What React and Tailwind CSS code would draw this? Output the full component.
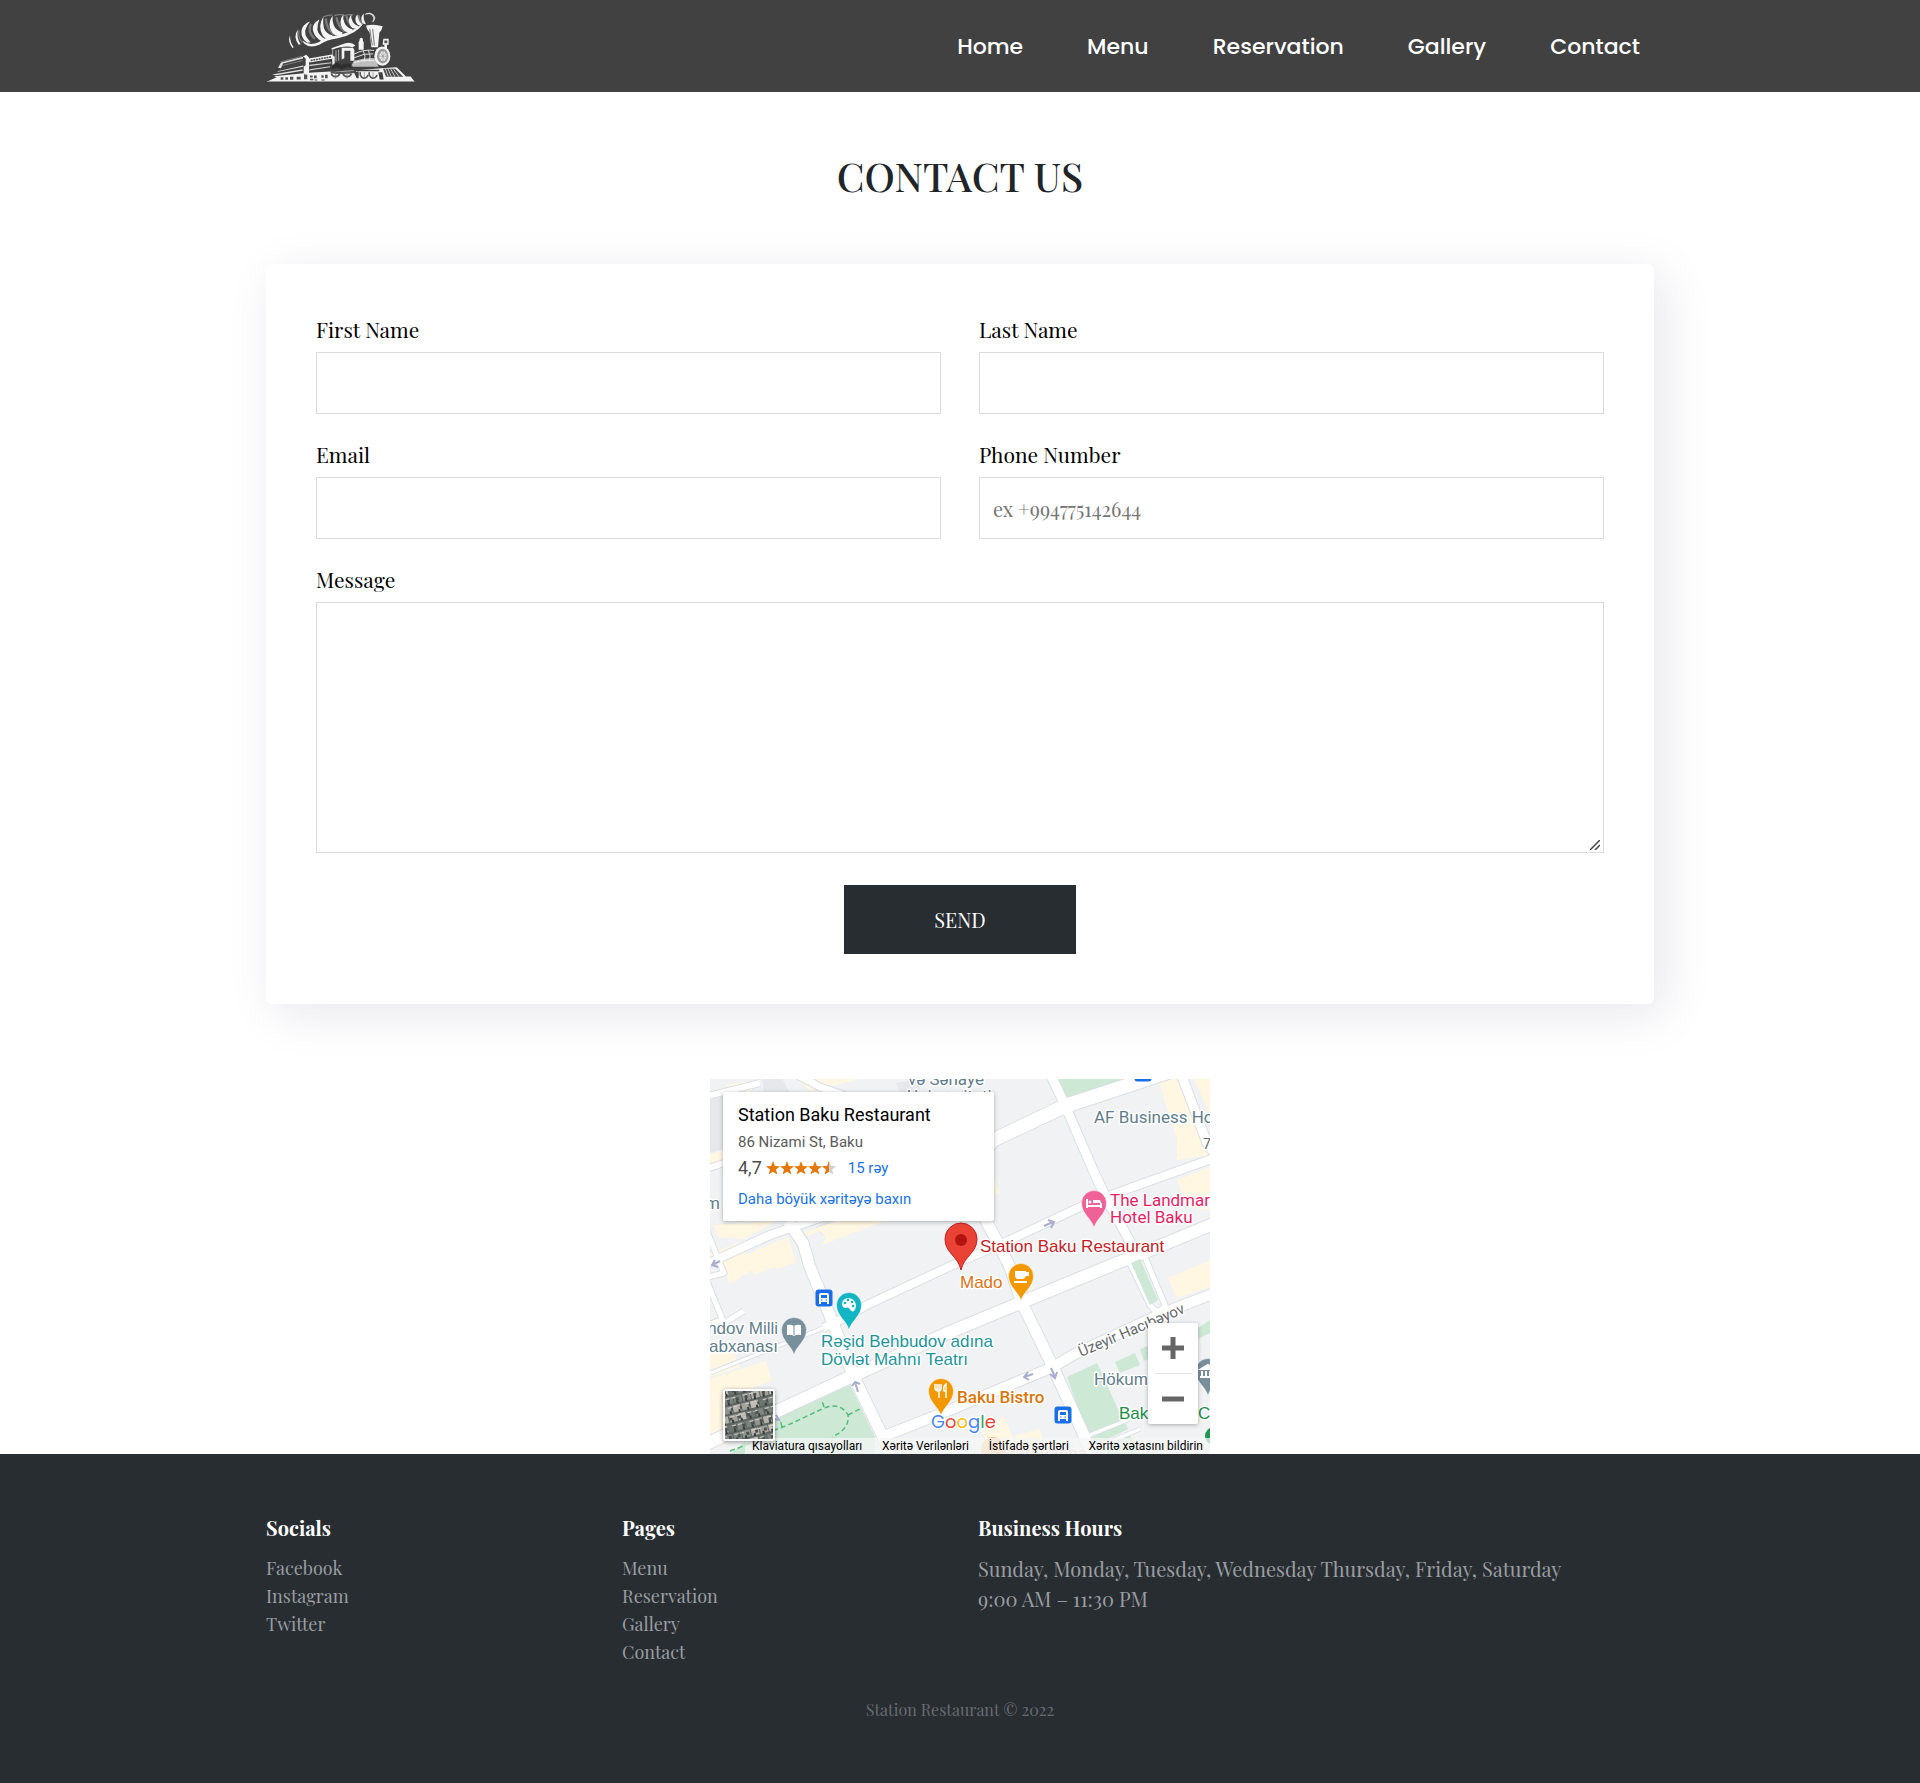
import React from "react";

const navLinks = ["Home", "Menu", "Reservation", "Gallery", "Contact"];

function TrainLogo() {
  return (
    <svg viewBox="36 20 450 230" className="h-[77px] w-[150px]" fill="#f4f4f4" role="img" aria-label="Station Restaurant">
      <g fill="none" stroke="#aaa" strokeLinecap="round" opacity=".55">
        <path d="M170 70q-10 20 10 40M216 54q0 24 22 44M248 50q4 22 22 38M278 46q4 20 20 30M314 44q0 12 8 22" strokeWidth="7" />
        <path d="M135 88q-4 20 10 34M208 46q12-6 26-5M242 42q12-4 26-2M272 42q12-4 24-2" strokeWidth="4" />
      </g>
      <g>
        <path d="M108 102q-8 18 8 38q4-2 2-4q-10-14-10-34z" />
        <path d="M132 84q-16 20 2 46l6-2q-14-20-8-44z" />
        <path d="M168 60q-32 12-24 44q4 12 16 20l10-2q-24-24-14-42q4-10 12-20z" />
        <path d="M196 54q-30 16-14 46q10 16 24 20l6-8q-20-12-22-28q0-16 6-30z" />
        <path d="M208 46q-18 28-2 56q10 14 28 8l2-8q-20-6-26-22q-4-16-2-34z" />
        <path d="M236 42q-18 26-2 50q12 16 30 8l2-7q-20-6-26-20q-6-14-4-31z" />
        <path d="M268 38q-16 22-2 44q10 16 28 8l2-7q-18-4-24-18q-6-12-4-27z" />
        <path d="M292 38q-14 18-2 36q8 12 22 6l2-6q-14-4-18-14q-6-10-4-22z" />
        <path d="M310 38q-12 16 0 30q6 6 14 4l-2-6q-10-8-12-28zM330 36q-14 12-4 30l10 2q-10-16-6-32z" />
      </g>
      <path d="M334 38q14-8 24 2q10 10-2 22q8-14-2-22q-8-6-20-2z" stroke="#e5e5e5" strokeWidth="2" />
      <path d="M146 118q20 16 48 4q24-18 54-20q42-8 80-36q-20 32-76 44q-34 4-56 20q-28 12-46-4z" />
      <path d="M336 72q24-6 50 2q-2 12-10 20l-4 43h-20l-5-43q-9-10-11-22z" />
      <path d="M347 82q4 26 8 50M356 82l5 50" fill="none" stroke="#777" strokeWidth="3" />
      <path d="M388 112h16v18h-5v12h-8v-12h-5z" />
      <path d="M391 117h9v8h-9z" fill="#555" />
      <ellipse cx="385" cy="164" rx="24" ry="29" />
      <ellipse cx="386" cy="164" rx="17" ry="22" fill="#999" />
      <ellipse cx="387" cy="164" rx="11" ry="15" fill="#eee" />
      <path d="M387 145v38M374 164h27M377 151l20 26M397 151l-20 26" stroke="#999" strokeWidth="2" />
      <path d="M232 140l40-14q20-6 32 6l-8 5q-25-6-62 8z" />
      <path d="M263 139h34l4 6v33h-12v-30h-18v22l-8 4z" />
      <path d="M236 144v34M246 146v34M254 144v34" fill="none" stroke="#aaa" strokeWidth="3" />
      <path d="M314 145v-19q-2-4 2-7q1-10 6-10q5 0 5 10q4 4 2 8v18z" />
      <path d="M300 158q30-16 60-11M300 169q32-15 58-12M300 183q30-10 60-6M328 148q9 16 2 34M343 146q9 18 3 34" fill="none" stroke="#ddd" strokeWidth="3" />
      <path d="M300 178q34-10 62-8l12 26H290z" opacity=".7" />
      <path d="M72 199l9-16l66-17v5l-60 15l-6 14zM70 209l78-17v4l-76 15zM54 219l92-16v5l-80 13z" opacity=".9" />
      <path d="M80 181l66-17M82 193l64-16" stroke="#999" strokeWidth="2" />
      <path d="M147 165l10-5l8 8v48h-16v-20l6-5v-20z" />
      <path d="M164 171l70-12l6 6l-6 7l-68 11z" />
      <path d="M170 177l62-11" stroke="#555" strokeWidth="5" strokeDasharray="6 2" />
      <path d="M166 190l66-8v3l-66 9zM166 203l62-9v3l-62 10z" opacity=".8" />
      <path d="M235 168l7-4v24l-7 5z" />
      <path d="M234 190q16-12 28 1q18-13 34 2v8q-18-9-31 3q-17-10-31-1z" fill="#222" opacity=".6" />
      <path d="M60 224l104-10l66-4l80-4l72-6l46-3l28 28h14l12 16H38l30-14z" />
      <path d="M230 206q34 8 76 0v8q-38 7-76 1z" fill="#555" />
      <g fill="none" stroke="#555" strokeWidth="5">
        <path d="M232 216a13 13 0 0 0 25 0M267 216a13 13 0 0 0 25 0M319 212a12 14 0 0 0 23 8M346 212a12 14 0 0 0 23 8" />
      </g>
      <path d="M244 210v22M279 210v22M331 212v20M357 212v20" stroke="#777" strokeWidth="2" />
      <path d="M300 205h76v4h-76zM373 212h12l4 22h-12zM300 213l14-3v20h-6z" fill="#414141" />
      <g fill="#555">
        <path d="M80 227h8v8H80zM94 227h8v8H94zM108 226h10v9h-10zM128 226h12v8h-12zM150 218l10 2v13h-10zM168 222h8v6h-8zM180 222h8v8h-8zM202 221h7v8h-7zM213 220h8v10h-8z" />
        <path d="M168 232h10v4h-10zM182 234h8v3h-8zM202 234h10v3h-10z" />
      </g>
      <path d="M387 202l37 0l24 24h-52z" fill="#4a4a4a" />
      <path d="M394 202l9 24M402 202l10 24M410 202l13 24M418 202l17 24" stroke="#ccc" strokeWidth="3" />
      <path d="M40 240H480" stroke="#999" strokeWidth="3" />
    </svg>
  );
}

function Pin({ x, y, color, children }) {
  return (
    <g transform={`translate(${x} ${y})`}>
      <path d="M0 25C-2 16-12.5 11-12.5 0a12.5 12.5 0 0 1 25 0C12.5 11 2 16 0 25z" fill={color} stroke="#fff" strokeOpacity=".5" />
      {children}
    </g>
  );
}

function BusStop({ x, y }) {
  return (
    <g transform={`translate(${x} ${y})`}>
      <rect x="-8.500" y="-8.500" width="17" height="17" rx="3" fill="#1a6fe8" />
      <path d="M-5 6V-3q0-2 2-2H3q2 0 2 2V6H3V4H-3V6z" fill="#fff" />
      <path d="M-3-3H3V0H-3z" fill="#1a6fe8" />
      <path d="M-3 2h1.500M1.500 2H3" stroke="#1a6fe8" />
    </g>
  );
}

const mainRoads = [
  ["M240 124L284 60L355 26L453-6L510-28", 12],
  ["M270 68L355 28L470-10", 12],
  ["M336-14L355 26L383 91L397 121L422 166", 9],
  ["M0 294L113 249", 3],
  ["M113 249L130 241L157 226L247 184L300 161L370 128L423 108L510 77", 8],
  ["M510 142L423 178L407 184L310 224L240 253L140 298L63 334L-10 368", 12],
  ["M265 118L277 143L300 188L312 224L343 288L373 354L385 385", 11],
  ["M510 212L453 234L363 276L343 288L240 331L177 356", 10],
  ["M78 142L93 164L100 188L123 244L143 296L173 358L184 384", 11],
  ["M470-8L497 64L510 82", 9],
  ["M-10 188L60 156L130 132", 8],
  ["M-4 150L14 194L-10 200", 5],
  ["M-10 92L20 82M-6 18L50 4", 6],
  ["M80-8L110 8L150 22", 7],
  ["M-4 200L14 244L34 232M14 240L-8 248", 5],
  ["M416 176L440 226Q448 238 455 226L434 176", 5],
  ["M380 356L420 340M392 366L430 350", 3],
];

function MapCanvas() {
  return (
    <svg viewBox="0 0 500 375" className="block h-full w-full" aria-hidden="true">
      <rect width="500" height="375" fill="#f0f2f4" />
      <g fill="#e6e8ec">
        <path d="M0 18L20 14V68L0 74zM186 4L210 0V14H190zM130 136L180 136L112 156L106 148zM52 0L70-4L80 14H54zM10 150L60 142L20 158z" />
      </g>
      <g fill="#fff7e2">
        <path d="M16 6L38 2L44 18L20 20zM86 0L150 0L100 12zM0 75L14 71V84L0 89zM92 154L150 134L190 136L112 166L116 158L110 152L96 158zM4 146L40 144L66 142L34 160L8 158zM7 172L30 163L38 178L78 158L86 184L66 190L60 180L20 205zM-4 198L-4 174L4 176zM36 176L72 160L86 180L44 196zM0 300L56 282L62 302L20 316L18 366L0 366zM0 270L18 262L30 288L0 298zM448 0L466 0L500 76L467 81L467 60zM484 0H500V36zM467 101L500 88V131L477 128zM458 199L500 181V208L467 219zM270 348L294 338L304 362L280 372zM284 100L290 114L284 116zM306 356L330 350L334 366L300 372z" />
      </g>
      <g fill="#cde9d6">
        <path d="M346 0H430L355 23zM357 298L387 284L407 328L418 350L382 368zM405 283L425 274L430 286L410 294zM430 270L438 267V280L434 282zM488 249L500 241V254L488 260zM140 306L165 358V375H20L66 338zM400 366L418 352L430 375H396z" />
      </g>
      <g fill="none" stroke="#53bd7a" strokeWidth="1.500" strokeDasharray="5 3">
        <path d="M20 372Q44 364 62 352L78 346L112 330Q130 322 138 336Q140 350 122 358M138 336L150 330M114 328L112 322M72 348L70 340" />
      </g>
      <g fill="none" strokeLinejoin="round">
        {mainRoads.map(([d, w]) => <path key={d} d={d} stroke="#dcdfe5" strokeWidth={w + 2} />)}
        {mainRoads.map(([d, w]) => <path key={d} d={d} stroke="#fff" strokeWidth={w} />)}
      </g>
      <path d="M421 184L430 180L448 221L440 226z" fill="#cde9d6" />
      <g fill="none" stroke="#a9add0" strokeWidth="2">
        <path d="M334 147L343 143M338 141L344 143L341 149" />
        <path d="M2 186L10 182M5 181L2 186L8 188" />
        <path d="M148 313L145 303M142 307L145 303L150 305" />
        <path d="M314 298L323 295M318 293L314 298L319 301" />
        <path d="M341 289L345 298M340 295L345 299L347 293" />
        <path d="M66 336L69 341L64 340" />
      </g>
      <g fontFamily="Roboto, sans-serif" fontSize="17" stroke="#fff" strokeWidth="3" paintOrder="stroke" strokeLinejoin="round">
        <g fill="#5f7d8c">
          <text x="198" y="6">və Sənaye</text>
          <text x="197" y="23">Universiteti</text>
          <text x="384" y="44">AF Business Ho</text>
          <text x="-5" y="130">m</text>
          <g fontFamily="Liberation Sans, sans-serif">
            <text x="68" y="255" textAnchor="end">Əfəndov Milli</text>
            <text x="68" y="273" textAnchor="end">Kitabxanası</text>
            <text x="384" y="306">Hökumət</text>
          </g>
        </g>
        <g fill="#e91e63">
          <text x="400" y="127">The Landmark</text>
          <text x="400" y="144">Hotel Baku</text>
        </g>
        <g fontFamily="Liberation Sans, sans-serif">
          <text x="270" y="173" fill="#c5221f">Station Baku Restaurant</text>
          <text x="250" y="209" fill="#dd7410">Mado</text>
          <text x="111" y="268" fill="#22959c">Rəşid Behbudov adına</text>
          <text x="111" y="286" fill="#22959c">Dövlət Mahnı Teatrı</text>
          <text x="409" y="340" fill="#218c4a">Bakı</text>
          <text x="488" y="340" fill="#218c4a">C</text>
        </g>
        <text x="247" y="324" fill="#dc7609" fontWeight="500">Baku Bistro</text>
        <text x="291" y="380" fill="#d8a070" opacity=".6">Mari Vanna</text>
        <text transform="translate(371 278) rotate(-23)" fontSize="15" fill="#65696d">Üzeyir Hacıbəyov</text>
        <text x="493" y="70" fontSize="14" fill="#65696d">7X</text>
      </g>
      <circle cx="283" cy="370" r="12" fill="#f2c58c" />
      <circle cx="504" cy="357" r="9" fill="#219653" />
      <BusStop x={114} y={219} />
      <BusStop x={353} y={336} />
      <BusStop x={433} y={-6} />
      <Pin x={384} y={124} color="#f06297">
        <path d="M-7-4V5M-7 3H7M7 5V0" stroke="#fff" strokeWidth="2" />
        <path d="M-1-3H5q2 0 2 3H-1z" fill="#fff" /><circle cx="-4" cy="-1" r="1.500" fill="#fff" />
      </Pin>
      <Pin x={311} y={197} color="#f39800">
        <path d="M-6-5H5V-4H8V0H5Q4 3 2 3H-3Q-6 3-6-1zM-7 5H6v2H-7z" fill="#fff" />
      </Pin>
      <Pin x={139} y={226} color="#12b5c4">
        <path d="M-7-1C-7-9 7-9 7 1Q6 8 2 6Q0 1-4 3Q-7 2-7-1z" fill="#fff" />
        <g fill="#12b5c4"><circle cx="-4" cy="-2" r="1.300" /><circle cx="-1" cy="-5" r="1.300" /><circle cx="3" cy="-3" r="1.300" /><circle cx="4" cy="1" r="1.300" /></g>
      </Pin>
      <Pin x={84} y={251} color="#78909c">
        <path d="M-7-5Q-3-6 0-4Q3-6 7-5V5Q3 4 0 6Q-3 4-7 5z" fill="#fff" />
        <path d="M0-4V5" stroke="#78909c" />
      </Pin>
      <Pin x={231} y={312} color="#f39800">
        <path d="M-4-7V-3Q-4 0-2 0V7M-6-7V-3Q-6 0-2 0Q0 0 0-3V-7M-2-7V0M5 7V-7Q2-5 3 0H5" stroke="#fff" strokeWidth="1.500" fill="none" />
      </Pin>
      <Pin x={498} y={292} color="#78909c">
        <path d="M-7-2L0-6L7-2zM-6 0v5M-2 0v5M2 0v5M-8 6H8" stroke="#fff" strokeWidth="2" fill="#fff" />
      </Pin>
      <path d="M251 191C248 177 235 174 235 160a16 16 0 0 1 32 0C267 174 254 177 251 191z" fill="#ea4335" stroke="#c5221f" />
      <circle cx="251" cy="161" r="6" fill="#b31412" />
      <text x="221" y="349" fontFamily="Poppins, Lato, sans-serif" fontSize="18" stroke="#fff" strokeWidth="3" paintOrder="stroke">
        <tspan fill="#4285f4">G</tspan><tspan fill="#ea4335">o</tspan><tspan fill="#fbbc04">o</tspan><tspan fill="#4285f4">g</tspan><tspan fill="#34a853">l</tspan><tspan fill="#ea4335">e</tspan>
      </text>
    </svg>
  );
}

function Star({ half }) {
  const d = "M7 0l1.900 4.900 5.100.300-4 3.300 1.400 5L7 10.700 2.600 13.500l1.400-5-4-3.300 5.100-.300z";
  return (
    <svg viewBox="0 0 14 14" className="h-[14px] w-[14px]">
      <path d={d} fill={half ? "#cfcfcf" : "#e7780b"} />
      {half && <path d="M7 0V10.700L2.600 13.500l1.400-5-4-3.300 5.100-.300z" fill="#e7780b" />}
    </svg>
  );
}

function SatelliteThumb() {
  const rows = [0, 1, 2, 3, 4, 5, 6];
  const shades = ["#a3a19a", "#7f8581", "#b5b1ab", "#6d7571", "#92958f", "#c2bcb6", "#7c837e"];
  return (
    <svg viewBox="0 0 48 48" className="block h-full w-full" aria-hidden="true">
      <rect width="48" height="48" fill="#5d6562" />
      <g transform="rotate(-14 24 24)">
        {rows.map((r) =>
          rows.map((c) => (
            <g key={`${r}-${c}`}>
              <rect x={c * 9 - 8 + (r % 2) * 3} y={r * 9 - 7} width="8" height="7" fill={shades[(r * 3 + c * 5) % 7]} />
              <rect x={c * 9 - 5 + (r % 3) * 2} y={r * 9 - 5} width="3" height="3" fill="#4b524f" />
              <rect x={c * 9 - 7 + (c % 2) * 3} y={r * 9 - 6} width="4" height="1" fill="#d4cec8" />
              <rect x={c * 9 - 3} y={r * 9 - 2} width="2" height="3" fill="#363d3b" />
            </g>
          ))
        )}
      </g>
    </svg>
  );
}

function RestaurantMap() {
  return (
    <section aria-label="Map" className="relative mx-auto h-[375px] w-full max-w-[500px] overflow-hidden font-[Roboto,sans-serif]">
      <MapCanvas />
      <div className="absolute top-[13px] left-[13px] w-[271px] rounded-[2px] bg-white px-[15px] pt-3 pb-[10px] shadow-[0_1px_4px_rgba(0,0,0,0.3)]">
        <h2 className="text-[18px] leading-[22px] text-black">Station Baku Restaurant</h2>
        <p className="mt-1 text-[15px] leading-6 text-[#5b5b5b]">86 Nizami St, Baku</p>
        <div className="flex items-center text-[15px] leading-7">
          <span className="text-[18px] text-[#4d4d4d]">4,7</span>
          <span className="ml-1 flex">
            <Star /><Star /><Star /><Star /><Star half />
          </span>
          <a href="#reviews" className="ml-3 text-[#1a73e8]">15 rəy</a>
        </div>
        <a href="#map" className="block pt-[5px] text-[15px] leading-6 text-[#1a73e8]">Daha böyük xəritəyə baxın</a>
      </div>
      <button type="button" aria-label="Satellite view" className="absolute top-[310px] left-[13px] z-10 h-[52px] w-[52px] overflow-hidden rounded-[3px] border-2 border-white shadow-[0_1px_4px_rgba(0,0,0,0.4)]">
        <SatelliteThumb />
      </button>
      <div className="absolute top-[244px] left-[438px] flex w-[50px] flex-col items-center rounded-[2px] bg-white shadow-[0_1px_4px_rgba(0,0,0,0.3)]">
        <button type="button" aria-label="Zoom in" className="flex h-[50px] w-full items-center justify-center">
          <svg viewBox="0 0 22 22" className="h-[22px] w-[22px]"><path d="M11 0V22M0 11H22" stroke="#666" strokeWidth="5" /></svg>
        </button>
        <span className="h-px w-[37px] bg-[#e6e6e6]" />
        <button type="button" aria-label="Zoom out" className="flex h-[50px] w-full items-center justify-center">
          <svg viewBox="0 0 22 22" className="h-[22px] w-[22px]"><path d="M0 11H22" stroke="#666" strokeWidth="5" /></svg>
        </button>
      </div>
      <div className="absolute right-0 bottom-0 flex h-4 w-[465px] items-center justify-between bg-[#f5f5f5]/75 px-[7px] text-[12px] leading-4 whitespace-nowrap text-black">
        <button type="button">Klaviatura qısayolları</button>
        <span>Xəritə Verilənləri</span>
        <a href="#terms">İstifadə şərtləri</a>
        <a href="#report">Xəritə xətasını bildirin</a>
      </div>
    </section>
  );
}

function Field({ id, label, type = "text", placeholder }) {
  return (
    <div className="flex flex-col">
      <label htmlFor={id} className="h-[38px] text-[21px] leading-[30px] text-black">{label}</label>
      <input id={id} type={type} placeholder={placeholder} className="h-[62px] w-full border border-[#dcdcdc] bg-white px-[13px] text-[20px] text-black placeholder:text-[#757575]" />
    </div>
  );
}

function FooterLinks({ title, links }) {
  return (
    <nav aria-label={title}>
      <h3 className="text-[20px] leading-6 font-bold text-white">{title}</h3>
      <ul className="mt-[14px] text-[18px] leading-7 text-[#9a9da0]">
        {links.map((l) => (
          <li key={l}><a href={`#${l.toLowerCase()}`}>{l}</a></li>
        ))}
      </ul>
    </nav>
  );
}

export default function App() {
  return (
    <div className="bg-white font-['Playfair_Display','Liberation_Serif',serif]">
      <header className="h-[92px] bg-[#414141]">
        <div className="mx-auto flex h-full max-w-[1388px] items-center justify-between">
          <a href="#home"><TrainLogo /></a>
          <nav aria-label="Main" className="flex gap-16 pt-[2px] pr-[14px] font-[Poppins,Inter,sans-serif] text-[22px] leading-8 font-medium text-white">
            {navLinks.map((l) => <a key={l} href={`#${l.toLowerCase()}`}>{l}</a>)}
          </nav>
        </div>
      </header>

      <main className="mx-auto max-w-[1388px] pt-[58px]">
        <h1 className="text-center text-[40px] leading-[52px] font-medium text-[#212529]">CONTACT US</h1>

        <form className="mt-[62px] rounded-[6px] bg-white p-[50px] shadow-[10px_10px_50px_rgba(20,20,80,0.1)]" onSubmit={(e) => e.preventDefault()}>
          <div className="grid grid-cols-2 gap-x-[38px] gap-y-[25px]">
            <Field id="first-name" label="First Name" />
            <Field id="last-name" label="Last Name" />
            <Field id="email" label="Email" type="email" />
            <Field id="phone" label="Phone Number" type="tel" placeholder="ex +994775142644" />
            <div className="col-span-2 flex flex-col">
              <label htmlFor="message" className="h-[38px] text-[21px] leading-[30px] text-black">Message</label>
              <div className="relative h-[251px]">
                <textarea id="message" className="block h-full w-full resize-none border border-[#dcdcdc] bg-white p-3 text-[20px]" />
                <svg viewBox="0 0 10 10" className="pointer-events-none absolute right-1 bottom-[3px] h-[10px] w-[10px]" aria-hidden="true">
                  <path d="M0 10L10 0M5 10L10 5" stroke="#444" strokeWidth="1.500" />
                </svg>
              </div>
            </div>
          </div>
          <button type="submit" className="mx-auto mt-8 block h-[69px] w-[232px] bg-[#282d32] text-[20px] text-white">SEND</button>
        </form>

        <div className="mt-[75px]"><RestaurantMap /></div>
      </main>

      <footer className="bg-[#282d32] pt-[62px] pb-[61px]">
        <div className="mx-auto grid max-w-[1388px] grid-cols-4 gap-9">
          <FooterLinks title="Socials" links={["Facebook", "Instagram", "Twitter"]} />
          <FooterLinks title="Pages" links={["Menu", "Reservation", "Gallery", "Contact"]} />
          <section className="col-span-2">
            <h3 className="text-[20px] leading-6 font-bold text-white">Business Hours</h3>
            <p className="mt-[14px] text-[20px] leading-[30px] text-[#9a9da0]">
              Sunday, Monday, Tuesday, Wednesday Thursday, Friday, Saturday
              <br />
              9:00 AM – 11:30 PM
            </p>
          </section>
        </div>
        <p className="mt-8 text-center text-[16px] leading-6 text-[#686c6f]">Station Restaurant © 2022</p>
      </footer>
    </div>
  );
}
